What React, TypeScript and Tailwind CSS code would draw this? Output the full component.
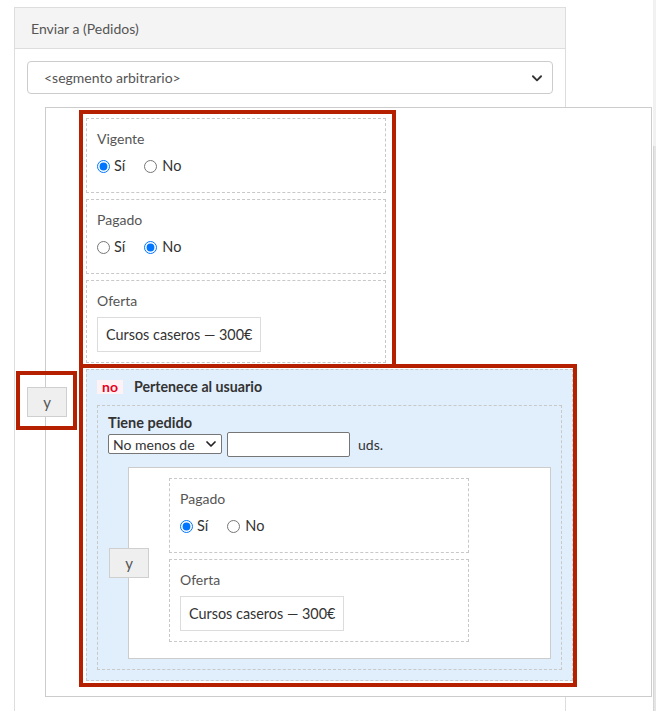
import React from "react";

const F = "font-['Lato','Open_Sans',sans-serif]";

function Radio({ checked }: { checked: boolean }) {
  return (
    <input
      type="radio"
      checked={checked}
      readOnly
      className="m-0 w-[13px] h-[13px] accent-[#0075ff]"
    />
  );
}

function RadioCond({ label, yes }: { label: string; yes: boolean }) {
  return (
    <div className="w-[300px] h-[75px] mb-[6px] border border-dashed border-[#c8c8c8] bg-white pt-[10px] pl-[10px]">
      <div className="h-[20px] leading-[20px] text-[14px] text-[#555]">{label}</div>
      <div className="mt-[7px] h-[20px] flex items-center text-[14.5px] text-[#333]">
        <label className="flex items-center gap-[4px]">
          <Radio checked={yes} />
          <span>Sí</span>
        </label>
        <label className="flex items-center gap-[5px] ml-[19px]">
          <Radio checked={!yes} />
          <span>No</span>
        </label>
      </div>
    </div>
  );
}

function OfertaCond() {
  return (
    <div className="w-[300px] h-[83px] mb-[6px] border border-dashed border-[#c8c8c8] bg-white pt-[10px] pl-[10px]">
      <div className="h-[20px] leading-[20px] text-[14px] text-[#555]">Oferta</div>
      <div className="mt-[6px] inline-flex items-center h-[35px] px-[8px] border border-[#dcdcdc] bg-white text-[14.4px] text-[#333]">
        Cursos caseros — 300€
      </div>
    </div>
  );
}

function YButton({ className }: { className: string }) {
  return (
    <div
      className={
        "absolute w-[40px] h-[30px] flex items-center justify-center bg-[#efefef] border border-[#cfcfcf] text-[15px] text-[#555] " +
        className
      }
    >
      y
    </div>
  );
}

export default function App() {
  return (
    <div className={"relative w-[656px] h-[711px] overflow-hidden bg-white " + F}>
      {/* panel */}
      <div className="pt-[7px] pl-[14px] w-[566px]">
        <div className="border border-[#dddddd] border-b-0 h-[720px]">
          <div className="h-[41px] bg-[#f4f4f4] border-b border-[#dddddd] pl-[16px] flex items-center text-[14px] text-[#555]">
            Enviar a (Pedidos)
          </div>
          <div className="px-[12px] pt-[12px]">
            <div className="h-[33px] rounded-[4px] border border-[#cccccc] flex items-center justify-between pl-[16px] pr-[8px] text-[14px] text-[#555]">
              <span>&lt;segmento arbitrario&gt;</span>
              <svg width="14" height="14" viewBox="0 0 24 24" fill="none" stroke="#333" strokeWidth="3.2" strokeLinecap="round" strokeLinejoin="round">
                <path d="M5 9l7 7 7-7" />
              </svg>
            </div>

            {/* outer group */}
            <div className="relative mt-[13px] pl-[18px]">
              <div className="w-[607px] border border-[#cccccc] bg-white pt-[10px] pl-[40px] pb-[9px]">
                <RadioCond label="Vigente" yes={true} />
                <RadioCond label="Pagado" yes={false} />
                <OfertaCond />

                {/* NOT block */}
                <div className="w-[487px] mb-[6px] border border-dashed border-[#c8c8c8] bg-[#e1effd] pt-[7px] pl-[10px] pr-[10px] pb-[10px]">
                  <div className="h-[20px] flex items-center">
                    <span className="h-[14px] px-[5px] bg-[#fff2f5] text-[#e8001c] font-bold text-[14px] leading-[14px] flex items-center">
                      no
                    </span>
                    <span className="ml-[11px] font-bold text-[14.2px] text-[#333]">Pertenece al usuario</span>
                  </div>
                  <div className="mt-[8px] border border-dashed border-[#c8c8c8] pt-[8px] pl-[10px] pr-[10px] pb-[10px]">
                    <div className="h-[18px] leading-[18px] font-bold text-[14.5px] text-[#333]">Tiene pedido</div>
                    <div className="h-[24px] flex items-center">
                      <div className="w-[114px] h-[20px] border border-[#767676] rounded-[2px] bg-white flex items-center justify-between pl-[4px] pr-[4px] text-[14px] text-[#333]">
                        <span>No menos de</span>
                        <svg width="12" height="12" viewBox="0 0 24 24" fill="none" stroke="#222" strokeWidth="3.5" strokeLinecap="round" strokeLinejoin="round">
                          <path d="M4 8l8 8 8-8" />
                        </svg>
                      </div>
                      <div className="ml-[5px] w-[123px] h-[25px] border border-[#767676] rounded-[2px] bg-white" />
                      <span className="ml-[8px] text-[14px] text-[#333]">uds.</span>
                    </div>

                    {/* nested group */}
                    <div className="relative mt-[11px] pl-[20px]">
                      <div className="border border-[#cccccc] bg-white pt-[10px] pl-[40px] pb-[10px]">
                        <RadioCond label="Pagado" yes={true} />
                        <OfertaCond />
                      </div>
                      <YButton className="left-[1px] top-[81px]" />
                    </div>
                  </div>
                </div>
              </div>
              <YButton className="left-0 top-[280px]" />
            </div>
          </div>
        </div>
      </div>

      {/* annotation outlines */}
      <div className="absolute left-[79px] top-[110px] w-[317px] h-[258px] border-[4px] border-[#b52000]" />
      <div className="absolute left-[79px] top-[364px] w-[498px] h-[323px] border-[4px] border-[#b52000]" />
      <div className="absolute left-[16px] top-[371px] w-[61px] h-[59px] border-[4px] border-[#b52000]" />

      {/* scrollbar strip */}
      <div className="absolute right-0 top-0 w-[3px] h-full bg-[#f1f1f1]" />
      <div className="absolute right-0 top-[146px] w-[3px] h-[565px] bg-[#e4e4e4] border-l border-[#d6d6d6]" />
    </div>
  );
}
